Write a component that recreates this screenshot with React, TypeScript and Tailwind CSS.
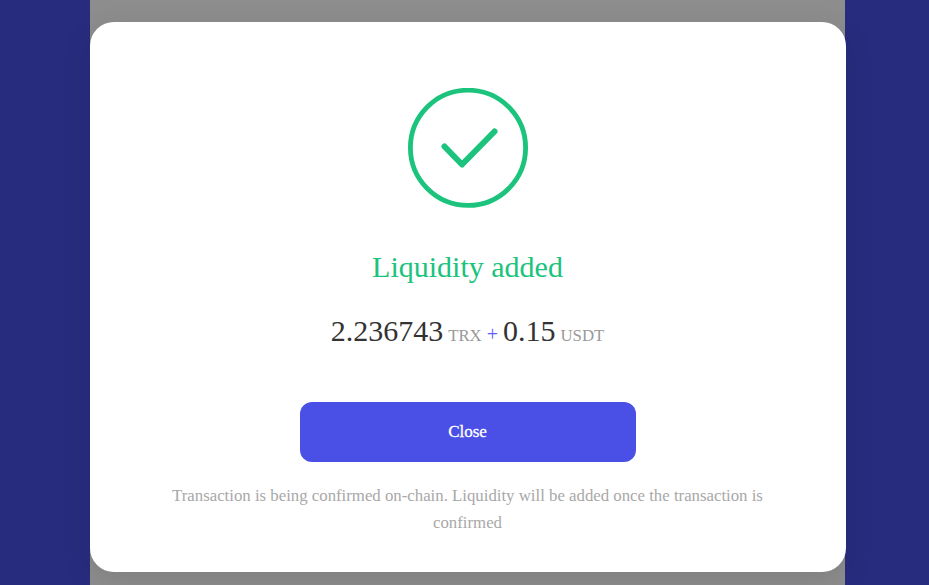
export default function App() {
  return (
    <div className="h-[585px] w-full overflow-hidden bg-[#282c7e] pl-[90px] font-['Liberation_Serif',serif]">
      <div className="h-full w-[755px] bg-[#8d8d8d] pt-[21.5px]">
        <div className="-ml-[0.5px] flex h-[550.4px] w-[756px] flex-col items-center rounded-[24px] bg-white pt-[66px] shadow-[0_8px_30px_rgba(0,0,0,0.1)]">
          <svg className="size-[120px] shrink-0" viewBox="0 0 120 120" fill="none" stroke="#1bc37d">
            <circle cx="60" cy="59.8" r="57.6" strokeWidth="4.8" />
            <path
              d="M36.5 58.5L54 76.5L86.5 43.5"
              strokeWidth="6"
              strokeLinecap="round"
              strokeLinejoin="round"
            />
          </svg>

          <h2 className="mt-[39.5px] text-[30px] leading-[40px] text-[#1bc37d]">Liquidity added</h2>

          <div className="mt-[24px] flex items-baseline gap-[5px] text-[16.8px] leading-[40px] text-[#999]">
            <span className="text-[30px] text-[#333]">2.236743</span>
            <span>TRX</span>
            <span className="text-[20px] leading-none text-[#5a60ff]">+</span>
            <span className="text-[30px] text-[#333]">0.15</span>
            <span>USDT</span>
          </div>

          <button className="mt-[45.8px] h-[60px] w-[336px] shrink-0 rounded-[12px] bg-[#4a50e6] text-[17px] text-white [-webkit-text-stroke:0.3px_white]">
            Close
          </button>

          <p className="mt-[20.5px] w-[600px] text-center text-[16.8px] leading-[27px] text-[#a8a8a8]">
            Transaction is being confirmed on-chain. Liquidity will be added once the transaction is confirmed
          </p>
        </div>
      </div>
    </div>
  )
}
